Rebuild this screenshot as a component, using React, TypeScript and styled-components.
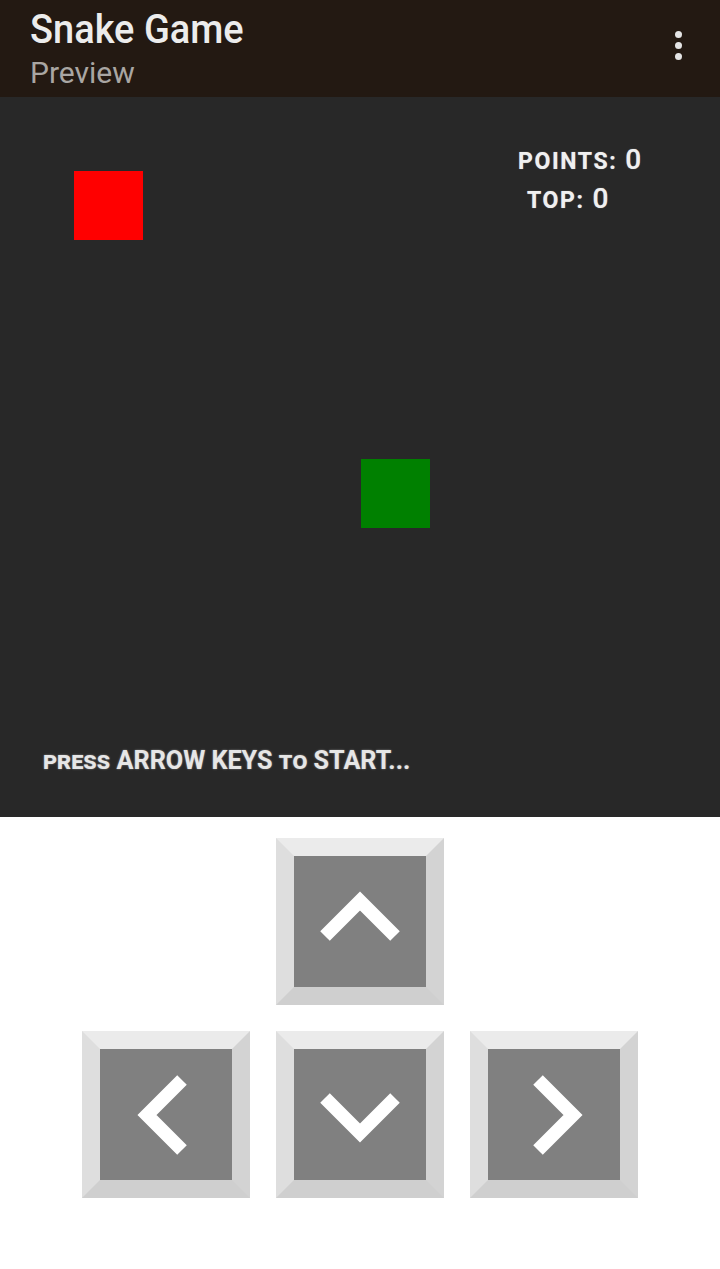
import React from "react";
import styled, { createGlobalStyle } from "styled-components";

const Global = createGlobalStyle`
  html, body { margin: 0; padding: 0; background: #ffffff; }
  body { font-family: Roboto, "Liberation Sans", sans-serif; }
  * { box-sizing: border-box; }
`;

const Page = styled.div`
  width: 720px;
  height: 1269px;
  display: flex;
  flex-direction: column;
  background: #ffffff;
`;

const Header = styled.header`
  height: 97px;
  background: #231912;
  display: flex;
  align-items: flex-start;
  justify-content: space-between;
  padding: 5px 38px 0 30px;
`;

const Titles = styled.div`
  display: flex;
  flex-direction: column;
`;

const Title = styled.div`
  font-family: Roboto, sans-serif;
  font-weight: 500;
  font-size: 38px;
  line-height: 44px;
  color: #ececec;
  transform: scaleY(1.08);
  transform-origin: top left;
`;

const Subtitle = styled.div`
  font-family: Roboto, sans-serif;
  font-size: 30px;
  line-height: 40px;
  margin-top: 4px;
  color: #a9a6a3;
`;

const Kebab = styled.div`
  margin-top: 26px;
  display: flex;
  flex-direction: column;
  gap: 4px;
`;

const Dot = styled.span`
  width: 7px;
  height: 7px;
  border-radius: 50%;
  background: #e4e4e4;
`;

const Board = styled.div`
  position: relative;
  height: 720px;
  background: #282828;
  overflow: hidden;
`;

const Cell = styled.div<{ $color: string }>`
  position: absolute;
  width: 69px;
  height: 69px;
  background: ${(p) => p.$color};
`;

const Score = styled.div`
  position: absolute;
  left: 518px;
  top: 45px;
  display: flex;
  flex-direction: column;
  color: #f0f0f0;
  font-family: Roboto, sans-serif;
  text-shadow: 0 0 1px rgba(255, 255, 255, 0.6);
`;

const ScoreLine = styled.div<{ $indent: number }>`
  padding-left: ${(p) => p.$indent}px;
  line-height: 35px;
  white-space: nowrap;
`;

const Label = styled.span`
  font-weight: 700;
  font-size: 23px;
  letter-spacing: 1.6px;
  margin-right: 4px;
`;

const Value = styled.span`
  font-weight: 500;
  font-size: 28px;
`;

const Hint = styled.div`
  position: absolute;
  left: 43px;
  top: 649px;
  color: #e6e6e6;
  font-family: Roboto, sans-serif;
  font-weight: 700;
  font-size: 25.2px;
  font-variant: small-caps;
  white-space: nowrap;
  text-shadow: 0 0 2px rgba(255, 255, 255, 0.45);
`;

const Controls = styled.div`
  display: flex;
  flex-direction: column;
  align-items: center;
  gap: 26px;
  padding-top: 21px;
`;

const Row = styled.div`
  display: flex;
  gap: 26px;
`;

const Key = styled.button`
  width: 168px;
  height: 167px;
  padding: 0;
  border-style: solid;
  border-width: 18px;
  border-color: #ebebeb #d3d3d3 #cfcfcf #dedede;
  background: #808080;
  display: flex;
  align-items: center;
  justify-content: center;
  cursor: pointer;
`;

const Chevron = styled.svg`
  display: block;
  width: 132px;
  height: 131px;
`;

type Dir = "up" | "down" | "left" | "right";

const paths: Record<Dir, string> = {
  up: "M31 80 L66 45 L101 80",
  down: "M31 49 L66 84 L101 49",
  left: "M82 31 L47 66 L82 101",
  right: "M50 31 L85 66 L50 101",
};

const ArrowKey = ({ dir }: { dir: Dir }) => (
  <Key aria-label={dir}>
    <Chevron viewBox="0 0 132 131">
      <path d={paths[dir]} fill="none" stroke="#ffffff" strokeWidth={13.5} strokeLinejoin="miter" strokeLinecap="butt" />
    </Chevron>
  </Key>
);

export default function App() {
  return (
    <Page>
      <Global />
      <Header>
        <Titles>
          <Title>Snake Game</Title>
          <Subtitle>Preview</Subtitle>
        </Titles>
        <Kebab>
          <Dot />
          <Dot />
          <Dot />
        </Kebab>
      </Header>
      <Board>
        <Cell $color="#ff0000" style={{ left: 74, top: 74 }} />
        <Cell $color="#008000" style={{ left: 361, top: 362 }} />
        <Score>
          <ScoreLine $indent={0}>
            <Label>POINTS:</Label> <Value>0</Value>
          </ScoreLine>
          <ScoreLine $indent={9}>
            <Label>TOP:</Label> <Value>0</Value>
          </ScoreLine>
        </Score>
        <Hint>press ARROW KEYS to START...</Hint>
      </Board>
      <Controls>
        <ArrowKey dir="up" />
        <Row>
          <ArrowKey dir="left" />
          <ArrowKey dir="down" />
          <ArrowKey dir="right" />
        </Row>
      </Controls>
    </Page>
  );
}
